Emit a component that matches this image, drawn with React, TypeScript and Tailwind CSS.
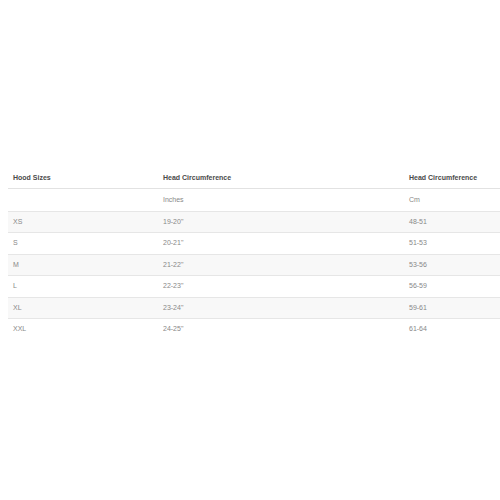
export default function App() {
  const rows = [
    ["XS", "19-20\"", "48-51"],
    ["S", "20-21\"", "51-53"],
    ["M", "21-22\"", "53-56"],
    ["L", "22-23\"", "56-59"],
    ["XL", "23-24\"", "59-61"],
    ["XXL", "24-25\"", "61-64"],
  ];
  return (
    <div className="w-[500px] h-[500px] bg-white pt-[168px] pl-[8px]" style={{ fontFamily: '"Liberation Sans", Arial, sans-serif' }}>
      <div className="w-[492px] text-[7px]">
        <div className="flex h-[21px] items-center font-bold text-[#4a4a4a] border-b border-[#e2e2e2]">
          <div className="w-[150px] pl-[5px]">Hood Sizes</div>
          <div className="w-[246px] pl-[5px]">Head Circumference</div>
          <div className="flex-1 pl-[5px]">Head Circumference</div>
        </div>
        <div className="flex h-[21.5px] items-center text-[#888]">
          <div className="w-[150px] pl-[5px]"></div>
          <div className="w-[246px] pl-[5px]">Inches</div>
          <div className="flex-1 pl-[5px]">Cm</div>
        </div>
        {rows.map((r, i) => (
          <div key={i} className={`flex h-[21.5px] items-center text-[#888] border-t border-[#e6e6e6] ${i % 2 === 0 ? "bg-[#f8f8f8]" : "bg-white"}`}>
            <div className="w-[150px] pl-[5px]">{r[0]}</div>
            <div className="w-[246px] pl-[5px]">{r[1]}</div>
            <div className="flex-1 pl-[5px]">{r[2]}</div>
          </div>
        ))}
      </div>
    </div>
  );
}
